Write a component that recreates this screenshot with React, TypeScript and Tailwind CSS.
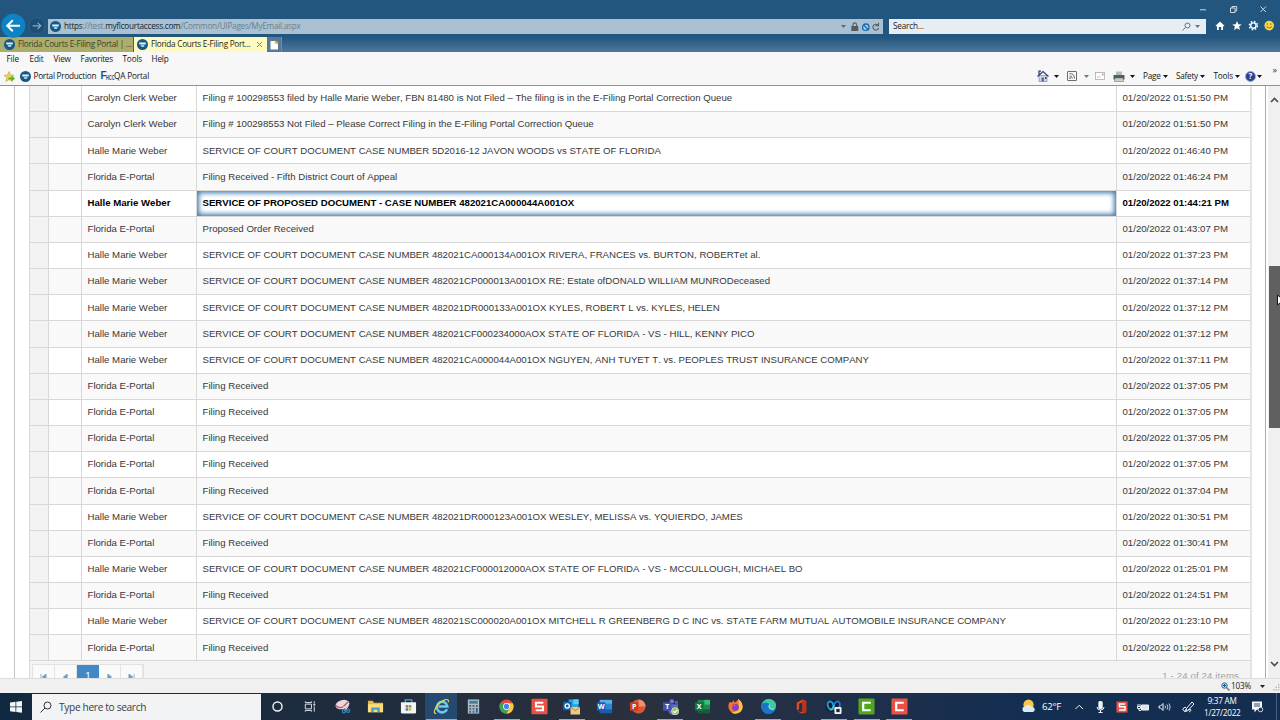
import type { ReactNode } from "react";

type Mail = { from: string; subject: string; time: string; unread?: boolean };

const mails: Mail[] = [
  { from: "Carolyn Clerk Weber", subject: "Filing # 100298553 filed by Halle Marie Weber, FBN 81480 is Not Filed – The filing is in the E-Filing Portal Correction Queue", time: "01:51:50" },
  { from: "Carolyn Clerk Weber", subject: "Filing # 100298553 Not Filed – Please Correct Filing in the E-Filing Portal Correction Queue", time: "01:51:50" },
  { from: "Halle Marie Weber", subject: "SERVICE OF COURT DOCUMENT CASE NUMBER 5D2016-12 JAVON WOODS vs STATE OF FLORIDA", time: "01:46:40" },
  { from: "Florida E-Portal", subject: "Filing Received - Fifth District Court of Appeal", time: "01:46:24" },
  { from: "Halle Marie Weber", subject: "SERVICE OF PROPOSED DOCUMENT - CASE NUMBER 482021CA000044A001OX", time: "01:44:21", unread: true },
  { from: "Florida E-Portal", subject: "Proposed Order Received", time: "01:43:07" },
  { from: "Halle Marie Weber", subject: "SERVICE OF COURT DOCUMENT CASE NUMBER 482021CA000134A001OX RIVERA, FRANCES vs. BURTON, ROBERTet al.", time: "01:37:23" },
  { from: "Halle Marie Weber", subject: "SERVICE OF COURT DOCUMENT CASE NUMBER 482021CP000013A001OX RE: Estate ofDONALD WILLIAM MUNRODeceased", time: "01:37:14" },
  { from: "Halle Marie Weber", subject: "SERVICE OF COURT DOCUMENT CASE NUMBER 482021DR000133A001OX KYLES, ROBERT L vs. KYLES, HELEN", time: "01:37:12" },
  { from: "Halle Marie Weber", subject: "SERVICE OF COURT DOCUMENT CASE NUMBER 482021CF000234000AOX STATE OF FLORIDA - VS - HILL, KENNY PICO", time: "01:37:12" },
  { from: "Halle Marie Weber", subject: "SERVICE OF COURT DOCUMENT CASE NUMBER 482021CA000044A001OX NGUYEN, ANH TUYET T. vs. PEOPLES TRUST INSURANCE COMPANY", time: "01:37:11" },
  { from: "Florida E-Portal", subject: "Filing Received", time: "01:37:05" },
  { from: "Florida E-Portal", subject: "Filing Received", time: "01:37:05" },
  { from: "Florida E-Portal", subject: "Filing Received", time: "01:37:05" },
  { from: "Florida E-Portal", subject: "Filing Received", time: "01:37:05" },
  { from: "Florida E-Portal", subject: "Filing Received", time: "01:37:04" },
  { from: "Halle Marie Weber", subject: "SERVICE OF COURT DOCUMENT CASE NUMBER 482021DR000123A001OX WESLEY, MELISSA vs. YQUIERDO, JAMES", time: "01:30:51" },
  { from: "Florida E-Portal", subject: "Filing Received", time: "01:30:41" },
  { from: "Halle Marie Weber", subject: "SERVICE OF COURT DOCUMENT CASE NUMBER 482021CF000012000AOX STATE OF FLORIDA - VS - MCCULLOUGH, MICHAEL BO", time: "01:25:01" },
  { from: "Florida E-Portal", subject: "Filing Received", time: "01:24:51" },
  { from: "Halle Marie Weber", subject: "SERVICE OF COURT DOCUMENT CASE NUMBER 482021SC000020A001OX MITCHELL R GREENBERG D C INC vs. STATE FARM MUTUAL AUTOMOBILE INSURANCE COMPANY", time: "01:23:10" },
  { from: "Florida E-Portal", subject: "Filing Received", time: "01:22:58" },
];

function PortalIcon() {
  return (
    <svg className="size-[11px] shrink-0" viewBox="0 0 22 22">
      <circle cx="11" cy="11" r="11" fill="#155a86" />
      <path d="M4 7h14l-1 4H5z" fill="#e6f1f6" />
      <path d="M7 12h8l-1 4H9z" fill="#a9cadb" />
    </svg>
  );
}

function Caret({ className = "" }: { className?: string }) {
  return (
    <svg className={"h-[3px] w-[5px] shrink-0 " + className} viewBox="0 0 10 6">
      <path d="M0 0h10L5 6z" fill="currentColor" />
    </svg>
  );
}

function TitleBar() {
  return (
    <div className="flex h-[19px] justify-end pt-1">
      <svg className="mr-[6px] h-[11px] w-[74px]" viewBox="0 0 74 11" fill="none" stroke="#dce7ef" strokeWidth="0.9">
        <path d="M0 5.8h6M30.5 4h4.5v4.5h-4.5zM32 4V2.5h4.7V7H35M60.5 2.500l5.500 5.500M66 2.500L60.500 8" />
      </svg>
    </div>
  );
}

function AddressRow() {
  return (
    <div className="relative flex h-[15px] items-stretch">
      <svg className="absolute top-[-6px] left-0 h-[25px] w-[48px]" viewBox="0 0 48 25" fill="none">
        <circle cx="13.3" cy="12.8" r="12" fill="#0d83c3" />
        <path d="M20 12.8H7.5M12.8 7.3l-5.6 5.5 5.6 5.5" stroke="#fff" strokeWidth="2" />
        <circle cx="37" cy="12.8" r="8" fill="#1c4d74" stroke="#2d648d" strokeWidth="0.8" />
        <path d="M32.7 12.8h8M37.5 9.6l3.3 3.2-3.3 3.2" stroke="#86a9c2" strokeWidth="1.2" />
      </svg>
      <div className="ml-12 flex w-[835px] items-center bg-[#a9c1d2] pr-[3px] pl-[2px] text-[8.2px] text-[#6b7f8e]">
        <PortalIcon />
        <span className="ml-[3px] tracking-[-0.25px] whitespace-pre">
          <span className="text-[#14232e]">https</span>://test.<span className="text-[#14232e]">myflcourtaccess.com</span>/Common/UIPages/MyEmail.aspx
        </span>
        <Caret className="ml-auto text-[#5d6c77]" />
        <svg className="ml-[5px] h-[10px] w-[29px]" viewBox="0 0 29 10" fill="none">
          <rect x="0.3" y="4" width="7" height="5" rx="0.5" fill="#565b5e" />
          <path d="M2 4V2.7a1.8 1.8 0 0 1 3.6 0V4" stroke="#565b5e" strokeWidth="1.1" />
          <circle cx="14.8" cy="5.2" r="3.2" stroke="#1667ad" strokeWidth="1.3" fill="#a8d4ee" />
          <path d="M12.5 3l4.6 4.5" stroke="#1667ad" strokeWidth="1.2" />
          <path d="M26.800 3A2.900 2.900 0 1 0 27.600 6M27.500 0.800v3h-3" stroke="#565b5e" strokeWidth="1.1" />
        </svg>
      </div>
      <div className="ml-[6px] flex w-[317px] items-center bg-[#e7eef3] px-[4px] text-[8.2px] text-[#1c1c1c]">
        <span className="tracking-[-0.2px]">Search...</span>
        <svg className="ml-auto size-[9px]" viewBox="0 0 18 18" fill="none" stroke="#66717a" strokeWidth="2">
          <circle cx="11" cy="7" r="5" />
          <path d="M7 11l-6 6" />
        </svg>
        <Caret className="mr-[2px] ml-[4px] text-[#66717a]" />
      </div>
      <svg className="ml-[9px] h-[13px] w-[60px]" viewBox="0 0 60 13">
        <path d="M0.5 6.8L5 2.6l4.5 4.2-.8.8-.7-.6v4H6.2V8H3.8v3H2V7l-.7.6z" fill="#fff" />
        <path d="M22 2l1.3 3.2 3.4.2-2.6 2.2.8 3.4-2.9-1.8-2.9 1.8.8-3.4-2.6-2.2 3.4-.2z" fill="#fff" />
        <circle cx="38.4" cy="6.6" r="2.7" fill="none" stroke="#fff" strokeWidth="1.4" />
        <circle cx="38.4" cy="6.6" r="4.1" fill="none" stroke="#fff" strokeWidth="1.4" strokeDasharray="1.6 1.62" />
        <circle cx="54.2" cy="6.6" r="4.8" fill="#f6d44b" />
        <path d="M52.4 4.3v1.6M55.8 4.3v1.6M51.4 7.6q2.8 3 5.6 0" stroke="#6f5a1b" strokeWidth="0.8" fill="none" />
      </svg>
    </div>
  );
}

function TabRow() {
  return (
    <div className="mt-[3px] flex h-[15px] bg-linear-to-b from-[#22567f] to-[#4e789a] text-[8.2px]">
      <div className="flex w-[133px] items-center gap-[3px] bg-[#abad6a] pl-[4px] text-[#3c4030]">
        <PortalIcon />
        <span className="tracking-[-0.26px] whitespace-nowrap">Florida Courts E-Filing Portal | ...</span>
      </div>
      <div className="flex w-[134px] items-center gap-[3px] border-l border-[#51613d] bg-[#fcfabf] pl-[3px] text-[#252525]">
        <PortalIcon />
        <span className="tracking-[-0.26px] whitespace-nowrap">Florida Courts E-Filing Port...</span>
        <svg className="mr-[5px] ml-auto size-[5px]" viewBox="0 0 10 10" stroke="#85836a" strokeWidth="2">
          <path d="M0 0l10 10M10 0L0 10" />
        </svg>
      </div>
      <div className="flex w-[15px] items-center justify-center border-r border-[#6b8daa] bg-[#54799b]">
        <svg className="h-[10px] w-[9px]" viewBox="0 0 9 10">
          <path d="M0.5 1h5L8 4v5.5H0.5z" fill="#fff" />
          <path d="M5.5 0l.8 1.5L9 2 7 3l.3 2L6 3.5 4 3l1.2-1z" fill="#e5ad42" />
        </svg>
      </div>
    </div>
  );
}

function MenuBars() {
  return (
    <div className="h-[34px] border-b border-[#929292] bg-[#f7f7f7] text-[8.2px] text-[#151515]">
      <div className="flex h-[15px] items-center pl-[6.5px] tracking-[-0.15px]">
        <span className="w-[23px]">File</span>
        <span className="w-[24px]">Edit</span>
        <span className="w-[27px]">View</span>
        <span className="w-[42px] tracking-[-0.25px]">Favorites</span>
        <span className="w-[29px]">Tools</span>
        <span>Help</span>
      </div>
      <div className="flex h-[18px] items-center">
        <svg className="ml-1 h-[11px] w-[11px]" viewBox="0 0 22 22">
          <path d="M10 1l3 7 7 .5-5.500 5 2 7L10 17l-6.500 4 2-7.500L0 8.500 7 8z" fill="#f4d24d" stroke="#b59735" strokeWidth="1" />
          <path d="M9 13h6v-4l7 6-7 6v-4H9z" fill="#5cb034" />
        </svg>
        <div className="ml-[5px]"><PortalIcon /></div>
        <span className="ml-[2.500px] w-[67px] tracking-[-0.25px] whitespace-nowrap">Portal Production</span>
        <span className="flex w-[13.500px] items-end font-['Liberation_Sans'] leading-none font-bold text-[#1d5076]">
          <span className="w-[5px] text-[10px] leading-[10px]">F</span>
          <span className="origin-left scale-x-60 text-[6.500px] leading-[6px]">HCC</span>
        </span>
        <span className="tracking-[-0.15px] whitespace-nowrap">QA Portal</span>
        <div className="mr-[18px] ml-auto flex items-center">
          <svg className="h-[12px] w-[12px]" viewBox="0 0 24 24">
            <path d="M4 11h16v12H4z" fill="#cfd8e4" stroke="#5b6b88" />
            <path d="M1 13L12 3l11 10M4 9V2h4" fill="none" stroke="#2e3f86" strokeWidth="2.5" />
            <path d="M9 15h5v8H9z" fill="#54739b" />
            <path d="M16 14h3v4h-3z" fill="#304a7e" />
          </svg>
          <Caret className="ml-[5.500px]" />
          <svg className="ml-[8px] size-[10px]" viewBox="0 0 20 20" fill="none" stroke="#6d6d6d" strokeWidth="2">
            <rect x="1" y="1" width="18" height="18" rx="1" />
            <path d="M5 5q10 0 10 10M5 9.500q5.500 0 5.500 5.500" />
            <circle cx="6" cy="14" r="1" />
          </svg>
          <Caret className="ml-[7px] text-[#777]" />
          <svg className="ml-[5.500px] h-[8px] w-[10px]" viewBox="0 0 20 16" fill="#fff" stroke="#a8a8a8" strokeWidth="1.500">
            <rect x="1" y="1" width="18" height="14" />
            <path d="M14 3h3v4h-3z" fill="#d28c8c" stroke="none" />
            <path d="M4 10h7" />
          </svg>
          <svg className="ml-[8px] h-[11px] w-[12px]" viewBox="0 0 24 22">
            <path d="M6 1h12v8H6z" fill="#b5bdc2" />
            <path d="M1 8h22v9H1z" fill="#555c60" />
            <path d="M4 14h16l1 7H3z" fill="#c4d4c8" stroke="#5c6660" />
          </svg>
          <Caret className="ml-[5.500px]" />
          <span className="ml-[8px] w-[18px] tracking-[-0.25px]">Page</span>
          <Caret className="ml-[2px]" />
          <span className="ml-[8px] w-[22px] tracking-[-0.25px]">Safety</span>
          <Caret className="ml-[2px]" />
          <span className="ml-[8.500px] w-[19px] tracking-[-0.2px]">Tools</span>
          <Caret className="ml-[2px]" />
          <span className="ml-[5.500px] flex size-[11px] items-center justify-center rounded-full border border-[#9aa9cd] bg-[#263f93] text-[8px] font-bold text-white">?</span>
          <Caret className="ml-px" />
        </div>
      </div>
      <span className="absolute top-[65px] right-[3px] text-[9px] text-[#333]">»</span>
    </div>
  );
}

function MailRow({ mail, striped }: { mail: Mail; striped: boolean }) {
  return (
    <div
      className={
        "grid h-[26.170px] shrink-0 grid-cols-[18px_33px_115px_920px_134px] border-b border-[#d8d8d8] [&>*]:flex [&>*]:items-center [&>*]:pl-[5.500px] [&>*]:pb-px " +
        (striped ? "bg-[#f9f9f9] " : "bg-white ") +
        (mail.unread ? "font-bold text-black" : "text-[#383838]")
      }
    >
      <div className="bg-[#f3f3f3]" />
      <div className="border-l border-[#d8d8d8]" />
      <div className="border-l border-[#d8d8d8] whitespace-nowrap">{mail.from}</div>
      <div
        className={
          "border-l border-[#d8d8d8] whitespace-nowrap " +
          (mail.unread ? "shadow-[inset_0_0_5px_2px_#3f7cb0]" : "")
        }
      >
        {mail.subject}
      </div>
      <div className="border-l border-[#d8d8d8] whitespace-nowrap">01/20/2022 {mail.time} PM</div>
    </div>
  );
}

const pagerPaths = [
  "M1 0v7M7 0L2.500 3.500 7 7z",
  "M6 0L1.500 3.500 6 7z",
  "",
  "M2 0l4.500 3.500L2 7z",
  "M7 0v7M1 0l4.500 3.500L1 7z",
];

function Pager() {
  return (
    <div className="flex h-[30px] shrink-0 items-start bg-[#f4f4f4] pt-[3px] pl-[2px]">
      <div className="flex h-[24px] border border-[#e2e2e2] bg-[#fafafa]">
        {pagerPaths.map((path, index) =>
          path === "" ? (
            <span key={index} className="w-[22px] bg-[#4188c7] pt-[7px] text-center text-[10px] text-white">1</span>
          ) : (
            <span key={index} className="flex w-[22px] justify-center border-r border-[#e4e4e4] pt-[8.500px]">
              <svg className="h-[6px] w-[7px]" viewBox="0 0 8 7" fill="#6d9fc9" stroke="#6d9fc9" strokeWidth="0.900">
                <path d={path} />
              </svg>
            </span>
          ),
        )}
      </div>
      <span className="mr-[11px] ml-auto pt-[7px] text-[9.700px] tracking-[0.100px] text-[#a2a2a2]">1 - 24 of 24 items</span>
    </div>
  );
}

function Content() {
  return (
    <div className="flex h-[592px] overflow-hidden bg-white font-['Liberation_Sans',sans-serif] text-[9.640px] [font-kerning:none]">
      <div className="box-content w-[14px] shrink-0 border-r border-[#c4c4c4]" />
      <div className="ml-[14px] flex w-[1223px] shrink-0 flex-col border-r-2 border-l border-r-[#e4e4e4] border-l-[#d8d8d8]">
        <div className="flex flex-col">
          {mails.map((mail, index) => (
            <MailRow key={index} mail={mail} striped={index % 2 === 1} />
          ))}
        </div>
        <Pager />
      </div>
      <div className="w-[14px] shrink-0 border-r border-[#ababab]" />
      <div className="relative ml-auto flex w-[12px] flex-col items-center justify-between bg-[#f0f0f0] pt-[11px] pb-[11px]">
        <svg className="h-[6px] w-[9px]" viewBox="0 0 9 6" fill="none" stroke="#4c4c4c" strokeWidth="1.700">
          <path d="M1 5l3.500-3.500L8 5" />
        </svg>
        <div className="absolute top-[180px] left-px h-[162px] w-[11px] bg-[#606060]" />
        <svg className="absolute top-[208px] left-[9px] h-[12px] w-[3px]" viewBox="0 0 3 12">
          <path d="M.5 1v10l3-2.500V3.500z" fill="#fff" stroke="#111" />
        </svg>
        <svg className="h-[6px] w-[9px]" viewBox="0 0 9 6" fill="none" stroke="#4c4c4c" strokeWidth="1.700">
          <path d="M1 1l3.500 3.500L8 1" />
        </svg>
      </div>
    </div>
  );
}

function StatusBar() {
  return (
    <div className="relative flex h-[15px] items-center justify-end border-t border-[#dedede] bg-[#f0f0f0] text-[8.200px] text-[#222]">
      <svg className="size-[9px]" viewBox="0 0 18 18" fill="none">
        <path d="M11 11l6 6" stroke="#777" strokeWidth="3" />
        <circle cx="7" cy="7" r="5.500" fill="#a9d6ef" stroke="#37719c" strokeWidth="2" />
        <path d="M4 7h6M7 4v6" stroke="#14578a" strokeWidth="2" />
      </svg>
      <span className="ml-px w-[20px] tracking-[-0.200px]">103%</span>
      <Caret className="mr-[15px] ml-[9px]" />
      <svg className="absolute right-0 bottom-[2px] size-[7px]" viewBox="0 0 7 7" fill="#bcbcbc">
        <path d="M5 0h1.500v1.500H5zM5 2.500h1.500V4H5zM5 5h1.500v1.500H5zM2.500 2.500H4V4H2.500zM2.500 5H4v1.500H2.500zM0 5h1.500v1.500H0z" />
      </svg>
    </div>
  );
}

function AppSlot({ children, open, active }: { children: ReactNode; open?: boolean; active?: boolean }) {
  return (
    <div className={"relative flex h-full w-[32.740px] shrink-0 items-center justify-center " + (active ? "bg-[#25496f]" : "")}>
      <svg className="size-[17px]" viewBox="0 0 18 18">{children}</svg>
      {open && <div className={"absolute bottom-0 h-[1.500px] bg-[#80afd7] " + (active ? "w-[31px]" : "w-[26px]")} />}
    </div>
  );
}

function Letter({ children, x = 5.5, y = 12 }: { children: string; x?: number; y?: number }) {
  return (
    <text x={x} y={y} fill="#fff" fontSize="7.500" fontWeight="bold" textAnchor="middle" fontFamily="Open Sans">
      {children}
    </text>
  );
}

function TaskbarApps() {
  return (
    <div className="flex h-full">
      <AppSlot><circle cx="9" cy="9" r="4.800" fill="none" stroke="#f1f4f7" strokeWidth="1.500" /></AppSlot>
      <AppSlot>
        <path d="M3.500 6.500h6.500v5H3.500zM3.500 3.500v1.300h6.500V3.500M3.500 14.500v-1.300h6.500v1.300M13 3.500v2M13 9v5.500" fill="none" stroke="#dfe5ea" strokeWidth="1" />
        <path d="M12 6h2v2h-2z" fill="#dfe5ea" />
      </AppSlot>
      <AppSlot>
        <ellipse cx="9" cy="7" rx="7.500" ry="4.800" fill="#ead8dc" transform="rotate(-15 9 7)" />
        <path d="M2 8q4 4 8 1l5-5" fill="none" stroke="#bd5566" strokeWidth="1.300" />
        <path d="M10 9l5 4M15 9l-4 5" stroke="#d5e3ec" strokeWidth="1" />
        <circle cx="10.500" cy="14" r="1.700" fill="none" stroke="#3284bd" strokeWidth="1.200" />
        <circle cx="15" cy="13.500" r="1.700" fill="none" stroke="#3284bd" strokeWidth="1.200" />
      </AppSlot>
      <AppSlot>
        <path d="M1 3h5l1.500 2H17v10H1z" fill="#e9b840" />
        <path d="M1 6.500h16V15H1z" fill="#fbdc79" />
        <path d="M4.500 10h9v5h-2.500v-2.500H7V15H4.500z" fill="#4c9cd0" />
      </AppSlot>
      <AppSlot>
        <path d="M5.500 5V2h7v3" fill="none" stroke="#4da8df" strokeWidth="1.300" />
        <path d="M1 4.500h16V15q0 1.500-1.500 1.500H2.500Q1 16.500 1 15z" fill="#f2f5f6" />
        <path d="M6 7.500h2.700v2.700H6z" fill="#dc5b39" />
        <path d="M9.300 7.500H12v2.700H9.300z" fill="#70a935" />
        <path d="M6 10.800h2.700v2.700H6z" fill="#2c91cd" />
        <path d="M9.300 10.800H12v2.700H9.300z" fill="#e9b224" />
      </AppSlot>
      <AppSlot open active>
        <path d="M14.800 11.800A5.600 5.600 0 1 1 15.200 9H6" fill="none" stroke="#65cbef" strokeWidth="2.700" />
        <path d="M3.500 16.500Q-.5 16.500 3 10.500 7 4 12.500 2q4.500-1.500 3.800 2.500" fill="none" stroke="#f3d146" strokeWidth="1.300" />
      </AppSlot>
      <AppSlot>
        <path d="M3 1.500h12v15H3z" fill="#b1bcc2" />
        <path d="M4.500 3h9v3h-9z" fill="#3e7fa5" />
        <path d="M4.500 7.500h2v2h-2zM8 7.500h2v2H8zM4.500 10.500h2v2h-2zM8 10.500h2v2H8zM4.500 13.500h2v2h-2zM8 13.500h2v2H8zM11.500 7.500h2v2h-2z" fill="#516675" />
        <path d="M11.500 10.500h2v5h-2z" fill="#19699d" />
      </AppSlot>
      <AppSlot open>
        <circle cx="9" cy="9" r="7.500" fill="#e4483b" />
        <path d="M9 9L2.500 5.300A7.500 7.500 0 0 0 9 16.500l3.300-5.600z" fill="#3da556" />
        <path d="M9 5.500h6.600A7.500 7.500 0 0 1 9 16.500l3.500-6z" fill="#f9cb3b" />
        <circle cx="9" cy="9" r="3.600" fill="#fff" />
        <circle cx="9" cy="9" r="2.800" fill="#4086eb" />
      </AppSlot>
      <AppSlot>
        <rect x="0.500" y="0.700" width="17" height="16.600" rx="1" fill="#ea5145" />
        <path d="M13 5H5.300v4h7.400v4H5" fill="none" stroke="#fff" strokeWidth="2.200" />
      </AppSlot>
      <AppSlot open>
        <path d="M6 1.500h10.500v10H6z" fill="#28a6e4" />
        <path d="M11 1.500h5.500v5H11z" fill="#62cbf3" />
        <rect x="0" y="4" width="9" height="9" rx="0.800" fill="#0c65b6" />
        <circle cx="4.500" cy="8.500" r="2.200" fill="none" stroke="#fff" strokeWidth="1.400" />
        <path d="M8 9.500h10v8H8z" fill="#f3c981" />
        <path d="M8 9.500l5 4 5-4" fill="none" stroke="#a87c40" />
      </AppSlot>
      <AppSlot>
        <path d="M4 2h13v14H4z" fill="#2b8ad5" />
        <path d="M4 2h13v4H4z" fill="#56b0ec" />
        <path d="M4 12h13v4H4z" fill="#195bb3" />
        <rect x="1" y="4.500" width="9" height="9" rx="0.800" fill="#1b5dbb" />
        <Letter>W</Letter>
      </AppSlot>
      <AppSlot>
        <circle cx="10" cy="9" r="7.500" fill="#db5635" />
        <path d="M10 1.500A7.500 7.500 0 0 1 17.500 9H10z" fill="#f58e6c" />
        <rect x="1" y="4.500" width="9" height="9" rx="0.800" fill="#c8401f" />
        <Letter>P</Letter>
      </AppSlot>
      <AppSlot open>
        <circle cx="10.500" cy="3.500" r="2.300" fill="#7479d2" />
        <circle cx="15.200" cy="4.700" r="1.700" fill="#5960c1" />
        <path d="M5 6.500h12v5a5 5 0 0 1-10 3z" fill="#6269c8" />
        <rect x="1" y="4.500" width="9" height="9" rx="0.800" fill="#4650b0" />
        <Letter>T</Letter>
        <circle cx="14" cy="14" r="3.800" fill="#90c857" stroke="#edf5e5" strokeWidth="0.700" />
        <path d="M12 14l1.500 1.500 2.700-3" fill="none" stroke="#fff" strokeWidth="1.200" />
      </AppSlot>
      <AppSlot>
        <path d="M4 2h13v14H4z" fill="#218751" />
        <path d="M11 2h6v5h-6z" fill="#36bf7c" />
        <path d="M4 12h13v4H4z" fill="#155f38" />
        <rect x="1" y="4.500" width="9" height="9" rx="0.800" fill="#12733f" />
        <Letter>X</Letter>
      </AppSlot>
      <AppSlot>
        <path d="M3 4l2 1 2-3 1 3q4-3 4-4 4 3 4.500 8a7.500 7.500 0 1 1-15 0Q1.500 6 3 4z" fill="#fa7136" />
        <path d="M12 1q5 4 4.500 9a7.500 7.500 0 0 1-12 5q10 1 7.500-14z" fill="#fdc53c" />
        <circle cx="9" cy="10" r="3.600" fill="#7c45be" />
        <path d="M5 7q3-1 4.500 1L7 9z" fill="#f34361" />
      </AppSlot>
      <AppSlot open>
        <circle cx="9" cy="9" r="8" fill="#1684cf" />
        <path d="M2 7Q4 1 10 1q7 1 7 7 0 4-5 4-3 0-2-2Q10 5 2 7z" fill="#41ca9e" />
        <path d="M1.500 7Q6 3 10 6.500 7 8 8.500 11.500T15.500 13Q12 17.500 8 17 1 15 1.500 7z" fill="#1976c5" />
        <path d="M10 7q-1.500 3 1 4.500 2 1 4.500 0" stroke="#bce9ec" strokeWidth="1" fill="none" />
      </AppSlot>
      <AppSlot>
        <path d="M4 5l6-3.500 4 1.500v12l-4 1.500L4 14l6 .7V4.500L6.500 6v6L4 13z" fill="#e64820" />
        <path d="M10 1.500L14 3v12l-4 1.500z" fill="#bd321b" />
      </AppSlot>
      <AppSlot open>
        <rect x="1" y="2.500" width="15" height="12" rx="5" fill="#111b27" />
        <ellipse cx="6" cy="8" rx="3" ry="4.500" fill="none" stroke="#18a7e6" strokeWidth="2" transform="rotate(-20 6 8)" />
        <ellipse cx="12.500" cy="8" rx="3" ry="4.500" fill="none" stroke="#2976dd" strokeWidth="2" transform="rotate(20 12.500 8)" />
        <path d="M5 12.500q3 0 4.500-5" fill="none" stroke="#48cdb0" strokeWidth="1.600" />
        <rect x="10" y="9.500" width="7.500" height="7.500" rx="1" fill="#f4f5f6" />
        <rect x="12" y="11.500" width="3.500" height="3.500" fill="#20252b" />
      </AppSlot>
      <AppSlot open>
        <rect x="0.500" y="0.500" width="17" height="17" rx="0.700" fill="#52a51e" />
        <path d="M13.500 5H5.500v8h8" fill="none" stroke="#fff" strokeWidth="2.300" />
      </AppSlot>
      <AppSlot open>
        <rect x="0.500" y="0.500" width="17" height="17" rx="0.700" fill="#ea5145" />
        <path d="M13.500 5H5.500v8h8" fill="none" stroke="#fff" strokeWidth="2.300" />
      </AppSlot>
    </div>
  );
}

function Tray() {
  return (
    <div className="ml-auto flex h-full items-center text-white">
      <svg className="h-[15px] w-[14px]" viewBox="0 0 15 16">
        <circle cx="7" cy="6" r="5.500" fill="#fbc648" />
        <path d="M3.500 14a3 3 0 0 1 0-6q1-2 3.500-2t3.500 2.500a2.800 2.800 0 0 1 1 5.500z" fill="#d9e9f5" />
      </svg>
      <span className="ml-[6px] w-[19px] text-[9.700px] tracking-[-0.350px]">62°F</span>
      <svg className="ml-[14px] h-[16px] w-[122px]" viewBox="0 0 122 16" fill="none" stroke="#eff3f7" strokeWidth="1">
        <path d="M0.500 10L4.200 6.300 8 10" />
        <rect x="23.300" y="2" width="4.400" height="8" rx="1.500" fill="#eff3f7" stroke="none" />
        <path d="M22 8q0 3 3.500 3T29 8M25.500 11v3M23.500 13.500h4" />
        <rect x="41.500" y="2.500" width="11" height="11" fill="#ea5145" stroke="none" />
        <path d="M50 5h-5.500v2.700H50V11h-6" stroke="#fff" strokeWidth="1.500" />
        <path d="M63 5v2.500M65 5v2.500M62.500 7.500h3v2h-3zM64 9.500v2h2" />
        <path d="M66.500 6h7v5h-7z" fill="#dce3ea" />
        <path d="M84 7h1.500L88 4.500v7L85.500 9H84z" />
        <path d="M90 6.500q1 1.500 0 3M92 5.500q1.800 2.500 0 5M94 4.500q2.500 3.500 0 7" strokeWidth="0.800" />
        <path d="M109.500 12.500l3.500-1 6-6.500-2-2-5.500 6.500zM109.500 12q-3-1-1-3t3 .5-1 3.500M113 11q3-1 3 0t-2 2" />
      </svg>
      <div className="ml-[7px] w-[36px] text-center text-[8.200px] leading-[12px] tracking-[-0.250px] whitespace-nowrap">
        <div>9:37 AM</div>
        <div>1/27/2022</div>
      </div>
      <svg className="mr-[12px] ml-[11px] h-[14px] w-[13px]" viewBox="0 0 13 14">
        <path d="M1 1.500h10v8H6l-2.500 3v-3H1z" fill="#f4f6f8" />
        <path d="M3 4h6M3 6h6" stroke="#17365c" strokeWidth="0.900" />
        <circle cx="9.500" cy="9.500" r="2.300" fill="#17365c" stroke="#f4f6f8" strokeWidth="0.800" />
      </svg>
      <div className="h-full w-[4px] border-l border-[#42617f]" />
    </div>
  );
}

function Taskbar() {
  return (
    <div className="flex h-[27px] items-center bg-linear-to-r from-[#10283f] from-0% via-[#2a303d] via-50% to-[#142e52] to-80%">
      <div className="flex w-[32px] justify-center">
        <svg className="size-[12px]" viewBox="0 0 24 24" fill="#f3f5f7">
          <path d="M0 3l11-1.500V11H0zM12.500 1.300L24 0v11H12.500zM0 12.500h11V22L0 20.500zM12.500 12.500H24v11l-11.500-1.300z" />
        </svg>
      </div>
      <div className="flex h-[26px] w-[229px] items-center bg-[#f1f3f4] pl-[8px] text-[10.200px] text-[#3a3d40]">
        <svg className="size-[12px]" viewBox="0 0 24 24" fill="none" stroke="#333" strokeWidth="2">
          <circle cx="15" cy="9" r="7" />
          <path d="M10 14l-9 9" />
        </svg>
        <span className="ml-[7px] pt-px tracking-[-0.350px]">Type here to search</span>
      </div>
      <TaskbarApps />
      <Tray />
    </div>
  );
}

export default function App() {
  return (
    <main className="relative h-[720px] w-[1280px] overflow-hidden bg-white font-['Open_Sans',sans-serif] leading-none">
      <header className="bg-[#22567f]">
        <TitleBar />
        <AddressRow />
        <TabRow />
        <MenuBars />
      </header>
      <Content />
      <StatusBar />
      <Taskbar />
    </main>
  );
}
